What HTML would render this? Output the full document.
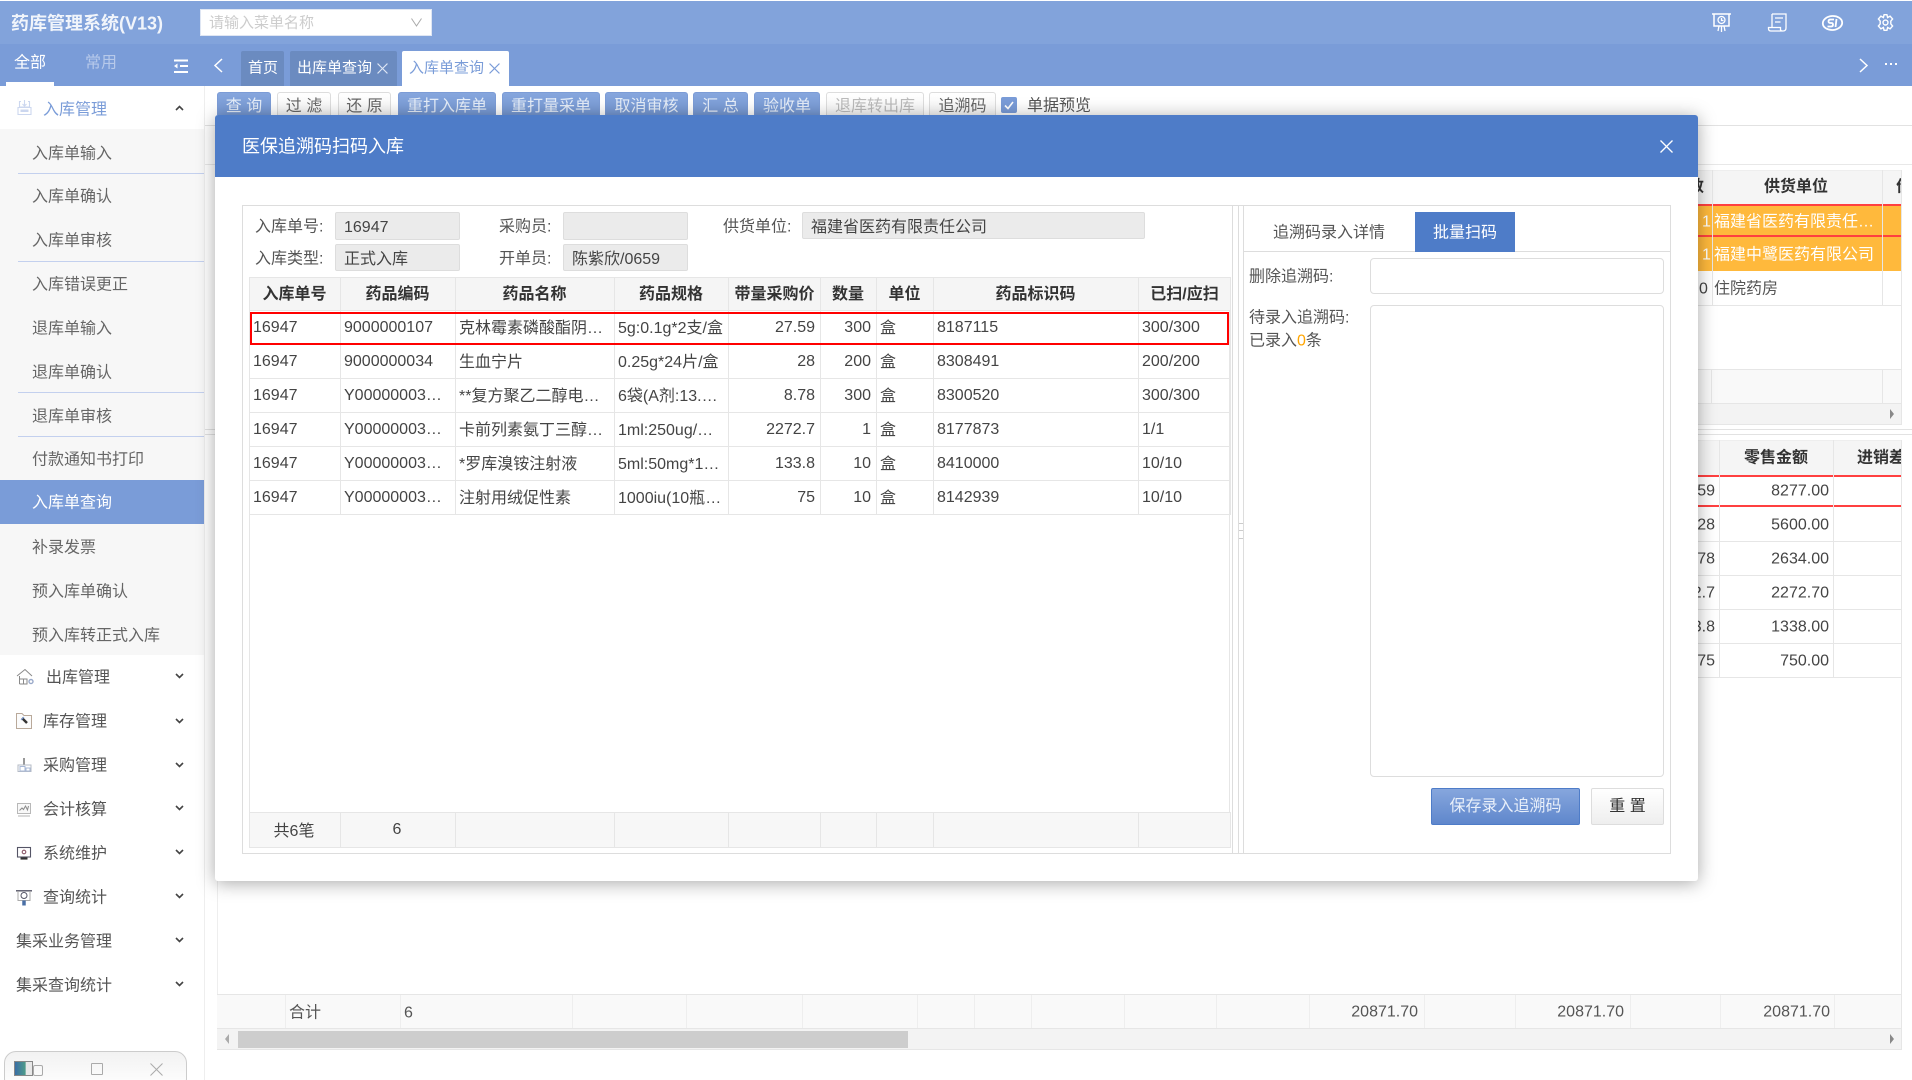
<!DOCTYPE html>
<html lang="zh-CN">
<head>
<meta charset="utf-8">
<title>药库管理系统</title>
<style>
html,body{margin:0;padding:0;width:1912px;height:1080px;overflow:hidden;background:#fff}
body{position:relative;font-family:"Liberation Sans","Noto Sans CJK SC",sans-serif;font-size:16px;color:#555}
.a{position:absolute;box-sizing:border-box}
.t{position:absolute;white-space:nowrap;transform:translateY(calc(-50% + 2.5px));line-height:22px}
.c{text-align:center;transform:translate(-50%,calc(-50% + 2.5px))}
.r{text-align:right;transform:translate(-100%,calc(-50% + 2.5px))}
.btn{position:absolute;top:92px;height:40px;box-sizing:border-box;border-radius:3px;text-align:center;line-height:27px;font-size:16px;white-space:nowrap}
.bl{background:linear-gradient(#86a6dd,#6a8fce);border:1px solid #7c9cd6;color:#e6eef9}
.wh{background:linear-gradient(#fff,#eee);border:1px solid #ddd;color:#666}
.sub{left:32px;color:#666}
.top{color:#555}
.inp{position:absolute;box-sizing:border-box;background:#ebebeb;border:1px solid #ddd;border-radius:2px;line-height:29px;padding-left:8px;color:#444;white-space:nowrap}
.lb{color:#555}
table{border-collapse:collapse;table-layout:fixed;position:absolute}
td,th{border:1px solid #e6e6e6;box-sizing:border-box;padding:0 5px 0 3px;white-space:nowrap;overflow:hidden;text-overflow:ellipsis;font-size:16px;color:#444;font-weight:normal}
th{background:#f5f5f5;font-weight:bold;color:#333;text-align:center;padding:0 4px 4px 3px}
td.n{text-align:right}
td.k{padding-bottom:3px}
svg{position:absolute;overflow:visible}
</style>
</head>
<body>

<!-- top bars -->
<div class="a" style="left:0;top:1px;width:1912px;height:43px;background:#82a3db"></div>
<div class="a" style="left:0;top:44px;width:1912px;height:42px;background:#7a9cd8"></div>
<div class="t" style="left:11px;top:21px;font-size:18px;font-weight:bold;color:#f1f5fb">药库管理系统(V13)</div>
<div class="a" style="left:200px;top:9px;width:232px;height:27px;background:#fff;border:1px solid #dfe6f3"></div>
<div class="t" style="left:209px;top:21px;font-size:15px;color:#ccc">请输入菜单名称</div>
<svg style="left:411px;top:18px" width="11" height="9" viewBox="0 0 11 9"><path d="M.5.5 5.500 8 10.500.5" fill="none" stroke="#aaa" stroke-width="1"/></svg>

<div class="t" style="left:14px;top:61px;font-size:16px;color:#fff">全部</div>
<div class="t" style="left:85px;top:61px;font-size:16px;color:#b7c9ea">常用</div>
<div class="a" style="left:6px;top:82px;width:48px;height:4px;background:#fff"></div>
<svg style="left:173px;top:59px" width="16" height="14" viewBox="0 0 16 14"><path d="M1 1.500H15M7 7H15M1 13H15" stroke="#fff" stroke-width="2" fill="none"/><path d="M1 7 4.500 4.500V9.500Z" fill="#fff"/></svg>
<svg style="left:213px;top:58px" width="10" height="15" viewBox="0 0 10 15"><path d="M9 1 2 7.500 9 14" fill="none" stroke="#fff" stroke-width="1.500"/></svg>

<div class="a" style="left:241px;top:51px;width:43px;height:35px;background:#6b8bc0;border-radius:2px 2px 0 0"></div>
<div class="t" style="left:248px;top:66px;font-size:15px;color:#fff">首页</div>
<div class="a" style="left:290px;top:51px;width:107px;height:35px;background:#6b8bc0;border-radius:2px 2px 0 0"></div>
<div class="t" style="left:297px;top:66px;font-size:15px;color:#fff">出库单查询</div>
<svg style="left:377px;top:63px" width="11" height="11" viewBox="0 0 10 10"><path d="M.5.500 9.500 9.500M9.500.500.500 9.500" stroke="#dfe7f5" stroke-width="1" fill="none"/></svg>
<div class="a" style="left:402px;top:51px;width:107px;height:35px;background:#fff;border-radius:2px 2px 0 0"></div>
<div class="t" style="left:409px;top:66px;font-size:15px;color:#7a9cd8">入库单查询</div>
<svg style="left:489px;top:63px" width="11" height="11" viewBox="0 0 10 10"><path d="M.5.500 9.500 9.500M9.500.500.500 9.500" stroke="#7a9cd8" stroke-width="1" fill="none"/></svg>

<!-- header icons -->
<svg style="left:1712px;top:13px" width="19" height="19" viewBox="0 0 19 19" fill="none" stroke="#fff" stroke-width="1.300"><path d="M0 1H19M2 1V13H17V1" stroke-width="1.500"/><circle cx="9.500" cy="7" r="3.500"/><path d="M9.500 5V7.500H11.500"/><path d="M9.500 13V19M7 13 6 18M12 13 13 18"/></svg>
<svg style="left:1768px;top:13px" width="19" height="19" viewBox="0 0 19 19" fill="none" stroke="#fff" stroke-width="1.300"><path d="M4 1H18V15Q18 18 15 18H3Q0.500 18 0.500 15.500V14.500H12.500V16.500Q12.500 18 14.500 18M4 1V14.500M7 5H15M7 9H12.500"/></svg>
<svg style="left:1822px;top:15px" width="21" height="16" viewBox="0 0 21 16" fill="none" stroke="#fff"><ellipse cx="10.500" cy="8" rx="9.700" ry="7" stroke-width="1.800" transform="rotate(-4 10.500 8)"/><path d="M12 4.500H8.500Q6.500 4.500 6.500 6.300T8.500 8H9.500Q11 8 11 9.700T9 11.500H5.500" stroke-width="1.800"/><path d="M14.500 4 13.500 12" stroke-width="1.800"/></svg>
<svg style="left:1877px;top:14px" width="17" height="17" viewBox="0 0 24 24" fill="none" stroke="#fff" stroke-width="2"><circle cx="12" cy="12" r="3.500"/><path d="M10 1H14L15 5 18.500 3 22 7 19.500 10V14L22 17 18.500 21 15 19 14 23H10L9 19 5.500 21 2 17 4.500 14V10L2 7 5.500 3 9 5Z"/></svg>
<svg style="left:1859px;top:58px" width="10" height="15" viewBox="0 0 10 15"><path d="M1 1 8 7.500 1 14" fill="none" stroke="#fff" stroke-width="1.500"/></svg>
<div class="a" style="left:1885px;top:63px;width:2px;height:2px;background:#fff"></div>
<div class="a" style="left:1890px;top:63px;width:2px;height:2px;background:#fff"></div>
<div class="a" style="left:1895px;top:63px;width:2px;height:2px;background:#fff"></div>

<!-- sidebar -->
<div class="a" style="left:0;top:86px;width:205px;height:994px;background:#fff;border-right:1px solid #eee"></div>
<div class="a" style="left:0;top:129px;width:204px;height:526px;background:#f7f7f7"></div>
<div class="a" style="left:0;top:480px;width:204px;height:44px;background:#7a9cd8"></div>
<div class="a" style="left:18px;top:173px;width:186px;height:1px;background:#c3d0ee"></div>
<div class="a" style="left:18px;top:261px;width:186px;height:1px;background:#c3d0ee"></div>
<div class="a" style="left:18px;top:392px;width:186px;height:1px;background:#c3d0ee"></div>
<div class="a" style="left:18px;top:436px;width:186px;height:1px;background:#c3d0ee"></div>

<svg style="left:17px;top:100px" width="15" height="15" viewBox="0 0 15 15" fill="none" stroke="#ccd7ef" stroke-width="1.100"><path d="M4 1.500H2.500V7H12.500V1.500H11M1 7.500H14V14.500H1ZM7.500 0V6M5.500 4 7.500 6 9.500 4"/><rect x="3.500" y="9.500" width="8" height="2.500" fill="#ccd7ef" stroke="none"/></svg>
<div class="t" style="left:43px;top:108px;color:#7a9cd8">入库管理</div>
<svg style="left:175px;top:105px" width="9" height="6" viewBox="0 0 9 6"><path d="M1 5 4.500 1.500 8 5" fill="none" stroke="#444" stroke-width="1.600"/></svg>

<div class="t sub" style="top:152px">入库单输入</div>
<div class="t sub" style="top:195px">入库单确认</div>
<div class="t sub" style="top:239px">入库单审核</div>
<div class="t sub" style="top:283px">入库错误更正</div>
<div class="t sub" style="top:327px">退库单输入</div>
<div class="t sub" style="top:371px">退库单确认</div>
<div class="t sub" style="top:415px">退库单审核</div>
<div class="t sub" style="top:458px">付款通知书打印</div>
<div class="t sub" style="top:501px;color:#fff">入库单查询</div>
<div class="t sub" style="top:546px">补录发票</div>
<div class="t sub" style="top:590px">预入库单确认</div>
<div class="t sub" style="top:634px">预入库转正式入库</div>

<div class="t top" style="left:46px;top:676px">出库管理</div>
<div class="t top" style="left:43px;top:720px">库存管理</div>
<div class="t top" style="left:43px;top:764px">采购管理</div>
<div class="t top" style="left:43px;top:808px">会计核算</div>
<div class="t top" style="left:43px;top:852px">系统维护</div>
<div class="t top" style="left:43px;top:896px">查询统计</div>
<div class="t top" style="left:16px;top:940px">集采业务管理</div>
<div class="t top" style="left:16px;top:984px">集采查询统计</div>

<svg style="left:17px;top:669px" width="17" height="16" viewBox="0 0 17 16" fill="none" stroke="#8a8a8a" stroke-width="1"><path d="M0 7 8 .5 15 7M2.500 7V15M2.500 15H10V10H2.500M6.500 10V15"/><circle cx="14" cy="12.500" r="2" stroke="#99a9c9" stroke-width="1.400"/></svg>
<svg style="left:16px;top:713px" width="16" height="16" viewBox="0 0 16 16" fill="none" stroke="#b9a99a" stroke-width="1"><path d="M.5.500H6L8 2.500H15.500V15.500H.5Z" fill="#fbfbfb"/><path d="M6 5 11 10" stroke="#333" stroke-width="2.500"/><path d="M5 7 8 4" stroke="#7a9cd8" stroke-width="1"/></svg>
<svg style="left:17px;top:758px" width="15" height="14" viewBox="0 0 15 14" fill="none" stroke="#b5bbc6" stroke-width="1"><path d="M7 0V7" stroke="#999" stroke-width="2"/><path d="M1 13.500V7H14V13.500Z"/><path d="M3 8.500H8V13H3ZM9 10H13V13H9Z" stroke="#a9b9d6"/></svg>
<svg style="left:17px;top:803px" width="14" height="14" viewBox="0 0 14 14" fill="none" stroke="#b8b8b8" stroke-width="1"><rect x=".5" y=".5" width="13" height="10" fill="#f8f8f8"/><path d="M2.500 7.500 5 5 6.500 6.500 8.500 3 10.500 7 11.500 3" stroke="#8a8a8a"/><path d="M1 13H13" stroke="#ccc" stroke-width="1.500"/></svg>
<svg style="left:17px;top:847px" width="14" height="13" viewBox="0 0 14 13" fill="none" stroke="#556" stroke-width="1.100"><rect x=".5" y=".5" width="13" height="9.500"/><circle cx="7" cy="5" r="1.800" stroke="#856"/><path d="M3.500 11.500H10.500" stroke-width="2.200" stroke="#333"/></svg>
<svg style="left:16px;top:890px" width="16" height="16" viewBox="0 0 16 16" fill="none" stroke="#556" stroke-width="1"><path d="M0 .8H16" stroke-width="1.400"/><path d="M2 1V10.500H14V1" stroke="#aaa"/><circle cx="8" cy="5.500" r="3" stroke="#556"/><path d="M8 10.500V15.500" stroke="#4a6fa5" stroke-width="3.500"/></svg>

<svg style="left:175px;top:673px" width="9" height="6" viewBox="0 0 9 6"><path d="M1 1 4.500 4.500 8 1" fill="none" stroke="#444" stroke-width="1.600"/></svg>
<svg style="left:175px;top:718px" width="9" height="6" viewBox="0 0 9 6"><path d="M1 1 4.500 4.500 8 1" fill="none" stroke="#444" stroke-width="1.600"/></svg>
<svg style="left:175px;top:762px" width="9" height="6" viewBox="0 0 9 6"><path d="M1 1 4.500 4.500 8 1" fill="none" stroke="#444" stroke-width="1.600"/></svg>
<svg style="left:175px;top:805px" width="9" height="6" viewBox="0 0 9 6"><path d="M1 1 4.500 4.500 8 1" fill="none" stroke="#444" stroke-width="1.600"/></svg>
<svg style="left:175px;top:849px" width="9" height="6" viewBox="0 0 9 6"><path d="M1 1 4.500 4.500 8 1" fill="none" stroke="#444" stroke-width="1.600"/></svg>
<svg style="left:175px;top:893px" width="9" height="6" viewBox="0 0 9 6"><path d="M1 1 4.500 4.500 8 1" fill="none" stroke="#444" stroke-width="1.600"/></svg>
<svg style="left:175px;top:937px" width="9" height="6" viewBox="0 0 9 6"><path d="M1 1 4.500 4.500 8 1" fill="none" stroke="#444" stroke-width="1.600"/></svg>
<svg style="left:175px;top:981px" width="9" height="6" viewBox="0 0 9 6"><path d="M1 1 4.500 4.500 8 1" fill="none" stroke="#444" stroke-width="1.600"/></svg>

<!-- window control pill -->
<div class="a" style="left:4px;top:1051px;width:183px;height:40px;background:linear-gradient(#f2f2f2,#fff);border:1px solid #ccc;border-radius:12px"></div>
<div class="a" style="left:14px;top:1061px;width:19px;height:15px;background:linear-gradient(90deg,#3a6ea5,#4e9a8a 60%,#e8e8e8 65%);border:1px solid #888"></div>
<div class="a" style="left:33px;top:1065px;width:10px;height:11px;border:1px solid #aaa;border-radius:2px"></div>
<div class="a" style="left:91px;top:1063px;width:12px;height:12px;border:1px solid #aaa;border-radius:1px"></div>
<svg style="left:150px;top:1063px" width="13" height="13" viewBox="0 0 13 13"><path d="M.5.500 12.500 12.500M12.500.500.500 12.500" stroke="#aaa" stroke-width="1" fill="none"/></svg>

<!-- toolbar -->
<div class="btn bl" style="left:217px;width:54px">查 询</div>
<div class="btn wh" style="left:277px;width:54px">过 滤</div>
<div class="btn wh" style="left:338px;width:53px">还 原</div>
<div class="btn bl" style="left:398px;width:98px">重打入库单</div>
<div class="btn bl" style="left:502px;width:98px">重打量采单</div>
<div class="btn bl" style="left:605px;width:83px">取消审核</div>
<div class="btn bl" style="left:693px;width:55px">汇 总</div>
<div class="btn bl" style="left:754px;width:66px">验收单</div>
<div class="btn wh" style="left:826px;width:98px;color:#bbb">退库转出库</div>
<div class="btn wh" style="left:929px;width:67px">追溯码</div>
<div class="a" style="left:1001px;top:97px;width:16px;height:16px;background:#7a9cd8;border-radius:2px"></div>
<svg style="left:1004px;top:101px" width="10" height="9" viewBox="0 0 10 9"><path d="M1 4.500 4 7.500 9 1" fill="none" stroke="#fff" stroke-width="1.600"/></svg>
<div class="t" style="left:1027px;top:104px;color:#555">单据预览</div>

<!-- main lines -->
<div class="a" style="left:205px;top:125px;width:1707px;height:1px;background:#e2e2e2"></div>
<div class="a" style="left:205px;top:164px;width:1707px;height:1px;background:#e8e8e8"></div>
<div class="a" style="left:205px;top:429px;width:1707px;height:1px;background:#e2e2e2"></div>
<div class="a" style="left:205px;top:434px;width:1707px;height:1px;background:#e2e2e2"></div>

<!-- background top table -->
<div class="a" style="left:1600px;top:170px;width:301px;height:34px;background:#f5f5f5;border-top:1px solid #eee;overflow:hidden">
  <div class="t" style="left:88px;top:14px;font-weight:bold;color:#333">数</div>
  <div class="t c" style="left:196px;top:14px;font-weight:bold;color:#333">供货单位</div>
  <div class="t" style="left:296px;top:14px;font-weight:bold;color:#333">价</div>
</div>
<div class="a" style="left:1600px;top:204px;width:301px;height:33px;background:#ffb93c;border-top:2px solid #ff4040;border-bottom:2px solid #ff4040"></div>
<div class="a" style="left:1600px;top:237px;width:301px;height:34px;background:#ffb93c"></div>
<div class="a" style="left:1600px;top:305px;width:301px;height:1px;background:#e6e6e6"></div>
<div class="a" style="left:1712px;top:170px;width:1px;height:135px;background:#e6e6e6"></div>
<div class="a" style="left:1882px;top:170px;width:1px;height:135px;background:#e6e6e6"></div>
<div class="t" style="left:1702px;top:220px;color:#fff">1</div>
<div class="t" style="left:1702px;top:253px;color:#fff">1</div>
<div class="t" style="left:1699px;top:287px;color:#444">0</div>
<div class="t" style="left:1714px;top:220px;color:#fff;width:165px;overflow:hidden;text-overflow:ellipsis">福建省医药有限责任公司</div>
<div class="t" style="left:1714px;top:253px;color:#fff">福建中鹭医药有限公司</div>
<div class="t" style="left:1714px;top:287px;color:#555">住院药房</div>
<div class="a" style="left:1600px;top:369px;width:301px;height:34px;background:#f9f9f9;border-top:1px solid #e6e6e6"></div>
<div class="a" style="left:1711px;top:369px;width:1px;height:34px;background:#e6e6e6"></div>
<div class="a" style="left:1882px;top:369px;width:1px;height:34px;background:#e6e6e6"></div>
<div class="a" style="left:1600px;top:403px;width:301px;height:22px;background:#f3f3f3;border-top:1px solid #e6e6e6;border-bottom:1px solid #e6e6e6"></div>
<div class="a" style="left:1901px;top:170px;width:1px;height:255px;background:#e6e6e6"></div>
<svg style="left:1889px;top:409px" width="6" height="10" viewBox="0 0 6 10"><path d="M1 0 5 5 1 10Z" fill="#888"/></svg>

<!-- background bottom table -->
<div class="a" style="left:1600px;top:440px;width:301px;height:35px;background:#f5f5f5;border-top:1px solid #eee;overflow:hidden">
  <div class="t c" style="left:176px;top:15px;font-weight:bold;color:#333">零售金额</div>
  <div class="t" style="left:257px;top:15px;font-weight:bold;color:#333">进销差</div>
</div>
<div class="a" style="left:1600px;top:475px;width:301px;height:2px;background:#ff4040"></div>
<div class="a" style="left:1600px;top:505px;width:301px;height:2px;background:#ff4040"></div>
<div class="a" style="left:1600px;top:541px;width:301px;height:1px;background:#e6e6e6"></div>
<div class="a" style="left:1600px;top:575px;width:301px;height:1px;background:#e6e6e6"></div>
<div class="a" style="left:1600px;top:609px;width:301px;height:1px;background:#e6e6e6"></div>
<div class="a" style="left:1600px;top:643px;width:301px;height:1px;background:#e6e6e6"></div>
<div class="a" style="left:1600px;top:677px;width:301px;height:1px;background:#e6e6e6"></div>
<div class="a" style="left:1719px;top:440px;width:1px;height:238px;background:#e6e6e6"></div>
<div class="a" style="left:1833px;top:440px;width:1px;height:238px;background:#e6e6e6"></div>
<div class="a" style="left:1901px;top:440px;width:1px;height:610px;background:#e6e6e6"></div>
<div class="t r" style="left:1715px;top:489px;color:#444">27.59</div>
<div class="t r" style="left:1715px;top:523px;color:#444">28</div>
<div class="t r" style="left:1715px;top:557px;color:#444">8.78</div>
<div class="t r" style="left:1715px;top:591px;color:#444">2272.7</div>
<div class="t r" style="left:1715px;top:625px;color:#444">133.8</div>
<div class="t r" style="left:1715px;top:659px;color:#444">75</div>
<div class="t r" style="left:1829px;top:489px;color:#444">8277.00</div>
<div class="t r" style="left:1829px;top:523px;color:#444">5600.00</div>
<div class="t r" style="left:1829px;top:557px;color:#444">2634.00</div>
<div class="t r" style="left:1829px;top:591px;color:#444">2272.70</div>
<div class="t r" style="left:1829px;top:625px;color:#444">1338.00</div>
<div class="t r" style="left:1829px;top:659px;color:#444">750.00</div>

<!-- summary -->
<div class="a" style="left:217px;top:881px;width:1px;height:169px;background:#eee"></div>
<div class="a" style="left:217px;top:994px;width:1684px;height:35px;background:#f9f9f9;border-top:1px solid #e6e6e6;border-bottom:1px solid #e6e6e6"></div>
<div class="a" style="left:217px;top:1029px;width:1684px;height:21px;background:#f3f3f3;border-bottom:1px solid #e6e6e6"></div>
<div class="a" style="left:238px;top:1031px;width:670px;height:17px;background:#cdcdcd"></div>
<svg style="left:224px;top:1034px" width="6" height="10" viewBox="0 0 6 10"><path d="M5 0 1 5 5 10Z" fill="#aaa"/></svg>
<svg style="left:1889px;top:1034px" width="6" height="10" viewBox="0 0 6 10"><path d="M1 0 5 5 1 10Z" fill="#888"/></svg>
<div class="a" style="left:285px;top:995px;width:1px;height:33px;background:#eee"></div>
<div class="a" style="left:400px;top:995px;width:1px;height:33px;background:#eee"></div>
<div class="a" style="left:572px;top:995px;width:1px;height:33px;background:#eee"></div>
<div class="a" style="left:686px;top:995px;width:1px;height:33px;background:#eee"></div>
<div class="a" style="left:802px;top:995px;width:1px;height:33px;background:#eee"></div>
<div class="a" style="left:917px;top:995px;width:1px;height:33px;background:#eee"></div>
<div class="a" style="left:974px;top:995px;width:1px;height:33px;background:#eee"></div>
<div class="a" style="left:1031px;top:995px;width:1px;height:33px;background:#eee"></div>
<div class="a" style="left:1124px;top:995px;width:1px;height:33px;background:#eee"></div>
<div class="a" style="left:1216px;top:995px;width:1px;height:33px;background:#eee"></div>
<div class="a" style="left:1309px;top:995px;width:1px;height:33px;background:#eee"></div>
<div class="a" style="left:1424px;top:995px;width:1px;height:33px;background:#eee"></div>
<div class="a" style="left:1515px;top:995px;width:1px;height:33px;background:#eee"></div>
<div class="a" style="left:1630px;top:995px;width:1px;height:33px;background:#eee"></div>
<div class="a" style="left:1720px;top:995px;width:1px;height:33px;background:#eee"></div>
<div class="a" style="left:1834px;top:995px;width:1px;height:33px;background:#eee"></div>
<div class="t" style="left:289px;top:1011px;color:#555">合计</div>
<div class="t" style="left:404px;top:1011px;color:#555">6</div>
<div class="t r" style="left:1418px;top:1010px;color:#555">20871.70</div>
<div class="t r" style="left:1624px;top:1010px;color:#555">20871.70</div>
<div class="t r" style="left:1830px;top:1010px;color:#555">20871.70</div>

<!-- dialog -->
<div class="a" style="left:215px;top:115px;width:1483px;height:766px;background:#fff;border-radius:3px;box-shadow:0 2px 18px rgba(0,0,0,.35)"></div>
<div class="a" style="left:215px;top:115px;width:1483px;height:62px;background:#4e7cc8;border-radius:3px 3px 0 0"></div>
<div class="t" style="left:242px;top:144px;font-size:18px;color:#fff">医保追溯码扫码入库</div>
<svg style="left:1660px;top:140px" width="13" height="13" viewBox="0 0 13 13"><path d="M.5.500 12.500 12.500M12.500.500.500 12.500" stroke="#fff" stroke-width="1.300" fill="none"/></svg>

<div class="a" style="left:242px;top:205px;width:1429px;height:649px;border:1px solid #ddd"></div>
<div class="a" style="left:1232px;top:205px;width:1px;height:649px;background:#ddd"></div>
<div class="a" style="left:1238px;top:205px;width:1px;height:649px;background:#ddd"></div>
<div class="a" style="left:1243px;top:205px;width:1px;height:649px;background:#ddd"></div>
<div class="a" style="left:1239px;top:523px;width:4px;height:1px;background:#ccc"></div>
<div class="a" style="left:1239px;top:530px;width:4px;height:1px;background:#ccc"></div>
<div class="a" style="left:1239px;top:538px;width:4px;height:1px;background:#ccc"></div>

<div class="t lb" style="left:255px;top:225px">入库单号:</div>
<div class="inp" style="left:335px;top:212px;width:125px;height:28px">16947</div>
<div class="t lb" style="left:499px;top:225px">采购员:</div>
<div class="inp" style="left:563px;top:212px;width:125px;height:28px"></div>
<div class="t lb" style="left:723px;top:225px">供货单位:</div>
<div class="inp" style="left:802px;top:212px;width:343px;height:27px">福建省医药有限责任公司</div>
<div class="t lb" style="left:255px;top:257px">入库类型:</div>
<div class="inp" style="left:335px;top:244px;width:125px;height:27px">正式入库</div>
<div class="t lb" style="left:499px;top:257px">开单员:</div>
<div class="inp" style="left:563px;top:244px;width:125px;height:27px">陈紫欣/0659</div>

<div class="a" style="left:249px;top:277px;width:981px;height:570px;border-left:1px solid #e6e6e6;border-right:1px solid #e6e6e6;border-bottom:1px solid #e6e6e6"></div>
<table style="left:249px;top:277px;width:981px">
<colgroup><col style="width:91px"><col style="width:115px"><col style="width:159px"><col style="width:114px"><col style="width:92px"><col style="width:56px"><col style="width:57px"><col style="width:205px"><col style="width:92px"></colgroup>
<tr style="height:33px"><th>入库单号</th><th>药品编码</th><th>药品名称</th><th>药品规格</th><th style="padding:0 0 4px 0">带量采购价</th><th>数量</th><th>单位</th><th>药品标识码</th><th style="padding:0 0 4px 0">已扫/应扫</th></tr>
<tr style="height:34px"><td>16947</td><td>9000000107</td><td class="k">克林霉素磷酸酯阴道泡腾片</td><td class="k">5g:0.1g*2支/盒</td><td class="n">27.59</td><td class="n">300</td><td class="k">盒</td><td>8187115</td><td>300/300</td></tr>
<tr style="height:34px"><td>16947</td><td>9000000034</td><td class="k">生血宁片</td><td class="k">0.25g*24片/盒</td><td class="n">28</td><td class="n">200</td><td class="k">盒</td><td>8308491</td><td>200/200</td></tr>
<tr style="height:34px"><td>16947</td><td>Y000000031234</td><td class="k">**复方聚乙二醇电解质散</td><td class="k">6袋(A剂:13.125g)</td><td class="n">8.78</td><td class="n">300</td><td class="k">盒</td><td>8300520</td><td>300/300</td></tr>
<tr style="height:34px"><td>16947</td><td>Y000000032534</td><td class="k">卡前列素氨丁三醇注射液</td><td class="k">1ml:250ug/支*1支</td><td class="n">2272.7</td><td class="n">1</td><td class="k">盒</td><td>8177873</td><td>1/1</td></tr>
<tr style="height:34px"><td>16947</td><td>Y000000033134</td><td class="k">*罗库溴铵注射液</td><td class="k">5ml:50mg*10支/盒</td><td class="n">133.8</td><td class="n">10</td><td class="k">盒</td><td>8410000</td><td>10/10</td></tr>
<tr style="height:34px"><td>16947</td><td>Y000000034734</td><td class="k">注射用绒促性素</td><td class="k">1000iu(10瓶装)/盒</td><td class="n">75</td><td class="n">10</td><td class="k">盒</td><td>8142939</td><td>10/10</td></tr>
</table>
<div class="a" style="left:250px;top:312px;width:979px;height:33px;border:2px solid #f00"></div>

<table style="left:249px;top:812px;width:981px">
<colgroup><col style="width:91px"><col style="width:115px"><col style="width:159px"><col style="width:114px"><col style="width:92px"><col style="width:56px"><col style="width:57px"><col style="width:205px"><col style="width:92px"></colgroup>
<tr style="height:35px;background:#f7f7f7"><td class="k" style="text-align:center">共6笔</td><td style="text-align:center">6</td><td></td><td></td><td></td><td></td><td></td><td></td><td></td></tr>
</table>

<!-- right pane -->
<div class="a" style="left:1244px;top:251px;width:427px;height:1px;background:#ddd"></div>
<div class="t" style="left:1273px;top:231px;color:#555">追溯码录入详情</div>
<div class="a" style="left:1415px;top:212px;width:100px;height:40px;background:#4e7cc8"></div>
<div class="t c" style="left:1465px;top:231px;color:#fff">批量扫码</div>
<div class="t lb" style="left:1249px;top:275px">删除追溯码:</div>
<div class="a" style="left:1370px;top:258px;width:294px;height:36px;border:1px solid #ddd;border-radius:4px;background:#fff"></div>
<div class="t lb" style="left:1249px;top:316px">待录入追溯码:</div>
<div class="t lb" style="left:1249px;top:339px">已录入<span style="color:#ffa500">0</span>条</div>
<div class="a" style="left:1370px;top:305px;width:294px;height:472px;border:1px solid #ddd;border-radius:4px;background:#fff"></div>
<div class="a" style="left:1431px;top:788px;width:149px;height:37px;background:linear-gradient(#86a6dd,#5f87cc);border:1px solid #4e7cc8;border-radius:2px;color:#e9f0fa;text-align:center;line-height:36px">保存录入追溯码</div>
<div class="a" style="left:1591px;top:788px;width:73px;height:37px;background:linear-gradient(#fff,#eee);border:1px solid #ddd;border-radius:2px;color:#333;text-align:center;line-height:36px">重 置</div>

</body>
</html>
